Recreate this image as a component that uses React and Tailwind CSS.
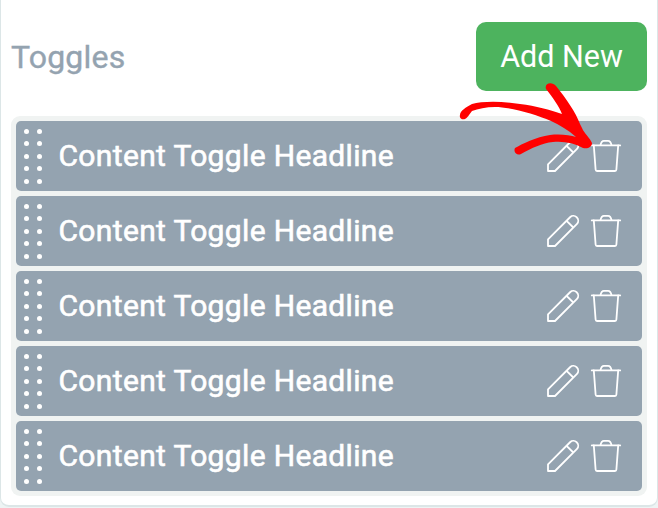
import React from 'react';

const toggles = [
    { id: 1, title: 'Content Toggle Headline' },
    { id: 2, title: 'Content Toggle Headline' },
    { id: 3, title: 'Content Toggle Headline' },
    { id: 4, title: 'Content Toggle Headline' },
    { id: 5, title: 'Content Toggle Headline' },
];

const PencilIcon = () => (
    <svg width="34" height="34" viewBox="0 0 34 34" fill="none" stroke="white" strokeWidth="1.8" strokeLinejoin="round">
        <path d="M2 32V25.3L24.3 3C26 1.3 28.8 1.4 30.6 3.2C32.6 5.2 32.8 8 31 9.8L9 32Z" />
        <path d="M20.6 6.8L27.3 13.5" />
    </svg>
);

const TrashIcon = () => (
    <svg width="32" height="34" viewBox="0 0 32 34" fill="none" stroke="white" strokeWidth="1.8" strokeLinejoin="round" strokeLinecap="round">
        <path d="M1.8 6.4H30.2" />
        <path d="M3.8 6.4L5.6 30.5C5.7 31.6 6.2 32 7 32H25C25.8 32 26.3 31.6 26.4 30.5L28.2 6.4" />
        <path d="M10.5 6.2C11 3.2 12 1.8 14 1.8H18C20 1.8 21 3.2 21.5 6.2" />
    </svg>
);

const DragHandle = () => (
    <div className="grid grid-cols-2 gap-x-[7.5px] gap-y-[7.5px]">
        {Array.from({ length: 10 }, (_, i) => (
            <span key={i} className="h-[5px] w-[5px] rounded-full bg-white"></span>
        ))}
    </div>
);

const ToggleRow = ({ title }) => (
    <div className="flex h-[70px] items-center rounded-[5px] bg-[#94a3b0] pl-2 pr-5">
        <DragHandle />
        <span className="ml-[17px] flex-1 whitespace-nowrap text-[30px] leading-none tracking-[0.34px] text-white [-webkit-text-stroke:0.6px_white]">
            {title}
        </span>
        <button aria-label="Edit"><PencilIcon /></button>
        <button aria-label="Delete" className="ml-[10px]"><TrashIcon /></button>
    </div>
);

const PointerArrow = () => (
    <svg className="pointer-events-none absolute left-0 top-0" width="658" height="508" viewBox="0 0 658 508" fill="red">
        <path d="M460 115C460 111 466 107 472 104C482 101 502 101 520 104C536 106 550 110 562 114C559 106 553 98 546 89C544 83 552 81 556 86C566 98 576 113 580 124L582 128C584 133 590 138 592 143C592 147 588 149 583 148C574 143 564 141 553 142C542 143 532 148 521 154C517 156 513 152 515 148C522 144 536 137 550 135C560 134 570 135 576 137C568 130 560 125 551 121C535 114 510 107 495 107C486 107 478 109 472 111C469 115 467 118 465 119C462 120 459 118 460 115Z" />
    </svg>
);

export default function App() {
    return (
        <div className="relative h-[508px] w-[658px] overflow-hidden bg-[#eef4f4] font-['Roboto',sans-serif]">
            <div className="h-[507px] rounded-b-[9px] border-x border-b-2 border-[#dce6e7] bg-white px-[10px] pt-[22px]">
                <div className="flex h-[69px] items-center justify-between">
                    <h2 className="text-[32px] leading-none tracking-[0.2px] text-[#94a3b0] [-webkit-text-stroke:0.4px_#94a3b0]">Toggles</h2>
                    <button className="h-[69px] w-[171px] rounded-[10px] bg-[#4db35e] pt-[2px] text-[30.5px] leading-none text-white">
                        Add New
                    </button>
                </div>
                <div className="mt-[25px] flex flex-col gap-[5px] rounded-[9px] bg-[#f0f3f2] p-[5px]">
                    {toggles.map((toggle) => (
                        <ToggleRow key={toggle.id} title={toggle.title} />
                    ))}
                </div>
            </div>
            <PointerArrow />
        </div>
    );
}
